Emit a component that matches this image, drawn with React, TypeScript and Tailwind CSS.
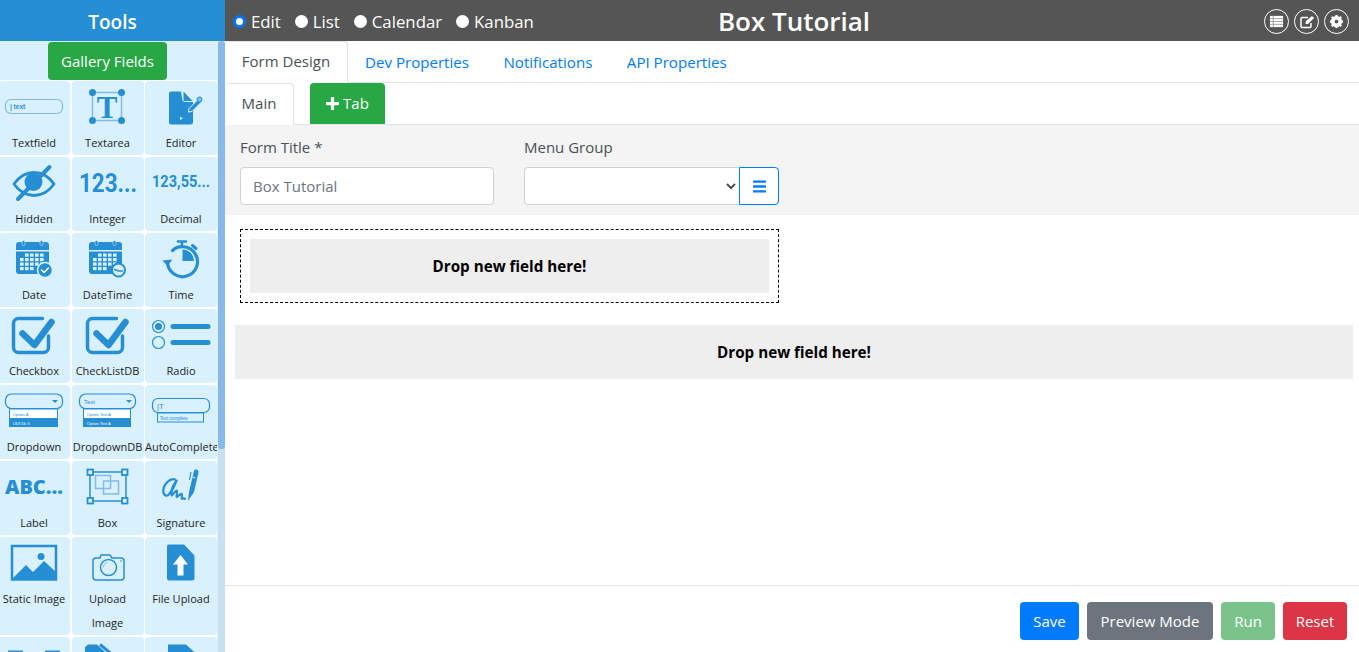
import React from "react";

const B = "#268fd3";
const L = "#7fbde8";

type IP = { children: React.ReactNode };
const Svg = ({ children }: IP) => (
  <svg viewBox="0 0 72 50" className="block h-[50px] w-[72px] shrink-0" fill="none">
    {children}
  </svg>
);

const Cal = ({ x }: { x: number }) => (
  <g transform={`translate(${x} 0)`}>
    <path d="M3 12a3 3 0 0 1 3-3h27a3 3 0 0 1 3 3v5H3z" fill={B} />
    <path d="M3 18.500h33V38a3 3 0 0 1-3 3H6a3 3 0 0 1-3-3z" fill={B} />
    <rect x="9" y="7.500" width="3" height="5" rx="1.500" fill={B} stroke="#d9f0ff" strokeWidth=".5" />
    <rect x="27" y="7.500" width="3" height="5" rx="1.500" fill={B} stroke="#d9f0ff" strokeWidth=".5" />
    {[0, 1, 2, 3].map((r) =>
      [0, 1, 2, 3, 4].map((c) =>
        (r === 0 && c === 0) || (r === 3 && c > 2) ? null : (
          <rect key={`${r}${c}`} x={7 + c * 5} y={20.5 + r * 4.5} width="3.600" height="3.200" fill="#d9f0ff" />
        ),
      ),
    )}
  </g>
);

const DropIcon = ({ text, x, w, a, b }: { text: string; x: number; w: number; a: string; b: string }) => (
  <Svg>
    <rect x={x + 0.5} y="9" width={w} height="14.500" rx="6" stroke={B} strokeWidth="1.200" />
    <text x={x + 5} y="19" fontSize="6" fill={B} fontFamily="Liberation Sans, sans-serif">{text}</text>
    <path d={`M${x + 47} 15h6l-3 3z`} fill={B} />
    <rect x={x + 4.5} y="24" width={w - 9} height="17.500" fill="#fff" stroke={B} />
    <rect x={x + 4.5} y="33" width={w - 9} height="8.500" fill={B} />
    <text x={x + 8} y="31" fontSize="4" fill={B} fontFamily="Liberation Sans, sans-serif">{a}</text>
    <text x={x + 8} y="39.500" fontSize="4" fill="#fff" fontFamily="Liberation Sans, sans-serif">{b}</text>
  </Svg>
);

const Check = ({ x }: { x: number }) => (
  <Svg>
    <path
      d={`M${x + 31} 9.500H${x + 7}a5 5 0 0 0-5 5v24a5 5 0 0 0 5 5h25a5 5 0 0 0 5-5V27`}
      stroke={B}
      strokeWidth="3.500"
      strokeLinecap="round"
    />
    <path d={`M${x + 11} 24.500L${x + 23} 36L${x + 40} 13`} stroke={B} strokeWidth="6.500" strokeLinecap="round" strokeLinejoin="round" />
  </Svg>
);

const fields: { label: React.ReactNode; icon: React.ReactNode }[] = [
  {
    label: "Textfield",
    icon: (
      <Svg>
        <rect x="5.500" y="18.500" width="57" height="14" rx="5.500" stroke={L} strokeWidth="1.200" />
        <text x="10" y="28" fontSize="6.500" fontWeight="700" fill={B} fontFamily="Liberation Sans, sans-serif">| text</text>
      </Svg>
    ),
  },
  {
    label: "Textarea",
    icon: (
      <Svg>
        <rect x="20.500" y="11.500" width="29" height="28" stroke={L} strokeWidth="1.500" />
        {[[20.5, 11.5], [49.5, 11.5], [20.5, 39.5], [49.5, 39.5]].map(([cx, cy]) => (
          <circle key={`${cx}${cy}`} cx={cx} cy={cy} r="3.500" fill={B} />
        ))}
        <text x="35" y="36.500" textAnchor="middle" fontSize="31" fontWeight="700" fill={B} fontFamily="Liberation Serif, serif">T</text>
      </Svg>
    ),
  },
  {
    label: "Editor",
    icon: (
      <Svg>
        <path d="M26 10.500h10l1 6.500a4 4 0 0 0 4 4h7V41a2.500 2.500 0 0 1-2.500 2.500H26a2 2 0 0 1-2-2V12.500a2 2 0 0 1 2-2z" fill={B} />
        <path d="M38.500 10.500l9 9.500h-7.500a1.500 1.500 0 0 1-1.500-1.500z" fill={B} />
        <path d="M44 27.500l9-9 3 3-9 9-3.500.5z" fill={B} stroke="#d9f0ff" strokeWidth="1" />
        <circle cx="54.500" cy="18.500" r="2.500" fill={L} stroke={B} strokeWidth="1" />
        <path d="M35 35.500l3 2-3 1.500z" fill="#d9f0ff" />
      </Svg>
    ),
  },
  {
    label: "Hidden",
    icon: (
      <Svg>
        <path d="M14 27C20 18.500 27 15.500 34 15.500S48 18.500 54 27C48 35.500 41 38.500 34 38.500S20 35.500 14 27z" stroke={B} strokeWidth="2.800" />
        <circle cx="33.500" cy="25" r="9" fill={B} />
        <path d="M49.500 10L18 42" stroke={B} strokeWidth="4" strokeLinecap="round" />
      </Svg>
    ),
  },
  {
    label: "Integer",
    icon: (
      <Svg>
        <text x="7" y="35" fontSize="25" fontWeight="700" fill={B} textLength="58" lengthAdjust="spacingAndGlyphs" fontFamily="Roboto, sans-serif">123...</text>
      </Svg>
    ),
  },
  {
    label: "Decimal",
    icon: (
      <Svg>
        <text x="7" y="30" fontSize="16" fontWeight="700" fill={B} textLength="58" lengthAdjust="spacingAndGlyphs" fontFamily="Roboto, sans-serif">123,55...</text>
      </Svg>
    ),
  },
  {
    label: "Date",
    icon: (
      <Svg>
        <Cal x={13} />
        <circle cx="45" cy="37" r="7.500" fill={B} stroke="#d9f0ff" strokeWidth="1.500" />
        <path d="M41.500 37l2.500 2.500 4.500-4.500" stroke="#fff" strokeWidth="1.500" strokeLinecap="round" />
      </Svg>
    ),
  },
  {
    label: "DateTime",
    icon: (
      <Svg>
        <Cal x={14} />
        <circle cx="46.500" cy="37" r="6.500" fill="#d9f0ff" stroke={B} strokeWidth="2" />
        <path d="M42.500 36.500l4 1.500h4" stroke={B} strokeWidth="1.500" strokeLinecap="round" />
      </Svg>
    ),
  },
  {
    label: "Time",
    icon: (
      <Svg>
        <path d="M26.500 18.500A15 15 0 1 1 22.500 29" stroke={B} strokeWidth="3.200" />
        <path d="M17.500 27h10l-5 6z" fill={B} transform="rotate(-5 22 29)" />
        <path d="M37.500 16.500a11.500 11.500 0 0 1 11.500 11.500H37.500z" fill={B} />
        <path d="M33 8.500h8M37 8.500v5" stroke={B} strokeWidth="2.500" strokeLinecap="round" />
        <path d="M47.500 12.500l3.500 3" stroke={B} strokeWidth="3" strokeLinecap="round" />
      </Svg>
    ),
  },
  { label: "Checkbox", icon: <Check x={11.5} /> },
  { label: "CheckListDB", icon: <Check x={13.5} /> },
  {
    label: "Radio",
    icon: (
      <Svg>
        <circle cx="13.500" cy="17.500" r="6" stroke={B} strokeWidth="1.200" />
        <circle cx="13.500" cy="17.500" r="3.500" fill={B} />
        <circle cx="13.500" cy="33.500" r="6" stroke={B} strokeWidth="1.200" />
        <path d="M28 17.500h35M28 33.500h35" stroke={B} strokeWidth="5" strokeLinecap="round" />
      </Svg>
    ),
  },
  { label: "Dropdown", icon: <DropIcon text="" x={5} w={57} a="Option A" b="ODI Dk 3" /> },
  { label: "DropdownDB", icon: <DropIcon text="Text" x={7} w={56} a="Option Text A" b="Option Text A" /> },
  {
    label: "AutoComplete",
    icon: (
      <Svg>
        <rect x="7.500" y="13.500" width="57" height="14" rx="5.500" stroke={B} strokeWidth="1.200" />
        <text x="12" y="24" fontSize="8" fill={B} fontFamily="Liberation Sans, sans-serif">|T</text>
        <rect x="12.500" y="28" width="46" height="9" fill="#d9f0ff" stroke={B} />
        <text x="15" y="34.500" fontSize="4.500" fill={B} fontFamily="Liberation Sans, sans-serif">Text complete</text>
      </Svg>
    ),
  },
  {
    label: "Label",
    icon: (
      <Svg>
        <text x="5" y="33" fontSize="20" fontWeight="800" fill={B} textLength="58" lengthAdjust="spacingAndGlyphs" fontFamily="Open Sans, sans-serif">ABC...</text>
      </Svg>
    ),
  },
  {
    label: "Box",
    icon: (
      <Svg>
        <rect x="18" y="11" width="36" height="29" stroke={B} strokeWidth="1.500" />
        {[[15.5, 8.5], [50, 8.5], [15.5, 37], [50, 37]].map(([x, y]) => (
          <rect key={`${x}${y}`} x={x} y={y} width="5.500" height="5.500" fill="#d9f0ff" stroke={B} strokeWidth="1.800" />
        ))}
        <rect x="23.500" y="14.500" width="15" height="13" stroke={L} strokeWidth="1.500" />
        <rect x="31.500" y="20" width="15" height="13" stroke={L} strokeWidth="1.500" />
      </Svg>
    ),
  },
  {
    label: "Signature",
    icon: (
      <Svg>
        <path d="M30 18.500C25 16.500 18 24 18.300 30c.3 5 3.500 6 6 3C27.500 29 30 24 31.700 19.500 28 24 26 30 26.700 34.500c2-2 3.500-4.500 5-5 1 2-.5 5 0 6.500 2-1 3-3 5-3.200.5 2 0 4 0 5 1-.5 2-1 3.300 0" stroke={B} strokeWidth="2.200" strokeLinecap="round" strokeLinejoin="round" />
        <path d="M43 40l1-9 5-21c.8-2.500 5-1.500 4.500 1.500L49 31z" fill={B} />
        <path d="M46 11l-1.500 8" stroke={B} strokeWidth="1.200" />
        <path d="M47.500 16l3 1" stroke="#d9f0ff" strokeWidth="1" />
      </Svg>
    ),
  },
  {
    label: "Static Image",
    icon: (
      <Svg>
        <rect x="12" y="9" width="44" height="33.500" stroke={B} strokeWidth="2.500" />
        <path d="M11 43l15-15 7 7 11-11 13 12v7z" fill={B} />
        <circle cx="41" cy="19.500" r="3.500" fill={B} />
      </Svg>
    ),
  },
  {
    label: (
      <>
        Upload
        <br />
        Image
      </>
    ),
    icon: (
      <Svg>
        <path d="M24 21h4l1-3h9l2 3h9a3 3 0 0 1 3 3v16a3 3 0 0 1-3 3H24a3 3 0 0 1-3-3V24a3 3 0 0 1 3-3z" stroke={B} strokeWidth="1.500" strokeLinejoin="round" />
        <circle cx="36.500" cy="30.500" r="8" stroke={B} strokeWidth="1.500" />
        <path d="M31.500 30.500a5 5 0 0 1 4-5" stroke={L} strokeWidth="1" />
        <circle cx="49" cy="24" r=".8" fill={B} />
      </Svg>
    ),
  },
  {
    label: "File Upload",
    icon: (
      <Svg>
        <path d="M24 7.500h15l10.500 11V41a2.500 2.500 0 0 1-2.500 2.500H24a2 2 0 0 1-2-2V9.500a2 2 0 0 1 2-2z" fill={B} />
        <path d="M35.500 18l7.500 9.500h-4.500v11h-6v-11h-4.500z" fill="#fff" />
      </Svg>
    ),
  },
  {
    label: "",
    icon: (
      <Svg>
        <path d="M8 14.500h15M45 14.500h15" stroke={B} strokeWidth="2" />
      </Svg>
    ),
  },
  {
    label: "",
    icon: (
      <Svg>
        <path d="M16 7.500h9l12 11v20H13V10z" fill={B} />
        <path d="M28 7.500l17 14" stroke={B} strokeWidth="3" />
      </Svg>
    ),
  },
  {
    label: "",
    icon: (
      <Svg>
        <path d="M23 7.500h18l11 10v26H23z" fill={B} />
      </Svg>
    ),
  },
];

export default function App() {
  return (
    <div className="flex h-screen w-full overflow-hidden bg-white text-[#212529] font-['Open_Sans',sans-serif]">
      <aside className="flex h-full w-[225px] shrink-0 flex-col bg-[#d9f0ff]">
        <div className="flex h-[41px] shrink-0 items-center justify-center bg-[#268fd3] pt-[3px] text-[19px] font-semibold text-white">Tools</div>
        <div className="flex min-h-0 flex-1">
          <div className="w-[218px] overflow-hidden">
            <div className="flex pl-[48px] pt-px">
              <div className="flex h-[38px] w-[119px] items-center justify-center rounded bg-[#28a745] text-[15px] text-white">Gallery Fields</div>
            </div>
            <div className="ml-[-2px] grid w-[219px] grid-cols-[72px_72px_72px] gap-[1.5px] bg-white pt-[0.5px]">
              {fields.map((f, i) => (
                <div key={i} className="flex min-h-[74.5px] flex-col items-center rounded bg-[#d9f0ff]">
                  <div className={i % 3 === 0 ? "translate-x-[2px]" : ""}>{f.icon}</div>
                  <div className="w-full overflow-hidden pt-[0.5px] text-center text-[11px] leading-6 text-[#212529]">{f.label}</div>
                </div>
              ))}
            </div>
          </div>
          <div className="flex h-full w-[7px] flex-col bg-[#c8e0ef]">
            <div className="h-[408px] rounded-sm bg-[#89b9e8]" />
          </div>
        </div>
      </aside>
      <main className="flex h-full min-w-0 flex-1 flex-col">
        <header className="relative flex h-[41px] shrink-0 items-center bg-[#555555] pl-2 pt-[2px] text-white">
          <div className="flex items-center gap-[14px] text-[16.8px]">
            {["Edit", "List", "Calendar", "Kanban"].map((t, i) => (
              <label key={t} className="flex items-center gap-[5px]">
                {i === 0 ? (
                  <span className="h-[13px] w-[13px] rounded-full border-[3px] border-[#0075ff] bg-white" />
                ) : (
                  <span className="h-[13px] w-[13px] rounded-full bg-white" />
                )}
                {t}
              </label>
            ))}
          </div>
          <h1 className="absolute left-[4px] right-0 text-center text-[26px] font-semibold text-white">Box Tutorial</h1>
          <div className="ml-auto flex items-center gap-[5px] pr-[10px]">
            <span className="flex h-[25px] w-[25px] items-center justify-center rounded-full border border-white">
              <svg viewBox="0 0 16 16" className="h-[15px] w-[15px]"><path d="M1 2h14v12H1z" fill="#fff" /><path d="M1 5h14M1 8h14M1 11h14M4.500 2v12" stroke="#888" strokeWidth=".8" /></svg>
            </span>
            <span className="flex h-[25px] w-[25px] items-center justify-center rounded-full border border-white">
              <svg viewBox="0 0 16 16" className="h-[16px] w-[16px]" fill="none"><path d="M12 9v3.500a1 1 0 0 1-1 1H3a1 1 0 0 1-1-1V4.500a1 1 0 0 1 1-1h6" stroke="#fff" strokeWidth="1.500" /><path d="M6.500 10l.5-3 6-5 2 2-6 6z" fill="#fff" /></svg>
            </span>
            <span className="flex h-[25px] w-[25px] items-center justify-center rounded-full border border-white">
              <svg viewBox="0 0 16 16" className="h-[15px] w-[15px]"><circle cx="8" cy="8" r="4.500" fill="none" stroke="#fff" strokeWidth="3" /><path d="M8 1v14M1 8h14M3 3l10 10M13 3L3 13" stroke="#fff" strokeWidth="2.400" /><circle cx="8" cy="8" r="2" fill="#555" /></svg>
            </span>
          </div>
        </header>

        <nav className="flex h-[42px] shrink-0 border-b border-[#dee2e6] text-[15px]">
          <div className="mb-[-1px] flex w-[123px] items-center justify-center rounded-t border-t border-r border-b border-t-[#dee2e6] border-r-[#dee2e6] border-b-white pb-[2px] text-[#495057]">Form Design</div>
          <div className="flex items-center gap-[34.5px] pl-[17px] pt-[1px] text-[15.1px] text-[#007bff]">
            <span>Dev Properties</span>
            <span>Notifications</span>
            <span>API Properties</span>
          </div>
        </nav>

        <div className="flex h-[42px] shrink-0 border-b border-[#dee2e6] text-[15px]">
          <div className="mb-[-1px] flex w-[69px] items-center justify-center rounded-t border-t border-r border-b border-t-[#dee2e6] border-r-[#dee2e6] border-b-white pb-[1px] text-[#495057]">Main</div>
          <div className="ml-4 flex w-[75px] items-center justify-center gap-1 rounded-t bg-[#28a745] text-white">
            <svg viewBox="0 0 12 12" className="h-[13px] w-[13px]"><path d="M6 1v10M1 6h10" stroke="#fff" strokeWidth="3" strokeLinecap="round" /></svg>
            Tab
          </div>
        </div>

        <section className="flex h-[90px] shrink-0 gap-[30px] bg-[#f4f4f4] px-[15px] pt-[10px] text-[15px] text-[#495057]">
          <div className="w-[254px]">
            <div className="h-[32px] leading-[24px]">Form Title *</div>
            <div className="flex h-[38px] items-center rounded border border-[#ced4da] bg-white px-3 pt-px text-[#6c757d]">Box Tutorial</div>
          </div>
          <div className="w-[255px]">
            <div className="h-[32px] leading-[24px]">Menu Group</div>
            <div className="flex h-[38px]">
              <div className="flex flex-1 items-center justify-end rounded-l border border-r-0 border-[#ced4da] bg-white pr-[2px]">
                <svg viewBox="0 0 12 12" className="h-[12px] w-[12px]" fill="none"><path d="M2 4l4 4 4-4" stroke="#495057" strokeWidth="2" /></svg>
              </div>
              <div className="flex w-10 items-center justify-center rounded-r border border-[#007bff] bg-white">
                <svg viewBox="0 0 14 14" className="h-[15px] w-[15px]"><path d="M1 2.500h12M1 7h12M1 11.500h12" stroke="#007bff" strokeWidth="2.200" /></svg>
              </div>
            </div>
          </div>
        </section>

        <div className="min-h-0 flex-1 px-[10px] pt-[14px]">
          <div className="ml-[5px] w-[539px] border border-dashed border-black p-[9px]">
            <div className="flex h-[54px] items-center justify-center bg-[#eeeeee] text-[15.2px] font-bold text-black">Drop new field here!</div>
          </div>
          <div className="mt-[22px] flex h-[54px] w-[1118px] items-center justify-center bg-[#eeeeee] text-[15.2px] font-bold text-black">Drop new field here!</div>
        </div>

        <footer className="flex h-[67px] shrink-0 items-start justify-end gap-2 border-t border-[#dee2e6] pr-3 pt-4 text-[15px] text-white">
          <div className="flex h-[38px] w-[59px] items-center justify-center rounded bg-[#007bff]">Save</div>
          <div className="flex h-[38px] w-[126px] items-center justify-center rounded bg-[#6c757d]">Preview Mode</div>
          <div className="flex h-[38px] w-[54px] items-center justify-center rounded bg-[#7ac48b]">Run</div>
          <div className="flex h-[38px] w-[64px] items-center justify-center rounded bg-[#dc3545]">Reset</div>
        </footer>
      </main>
    </div>
  );
}
